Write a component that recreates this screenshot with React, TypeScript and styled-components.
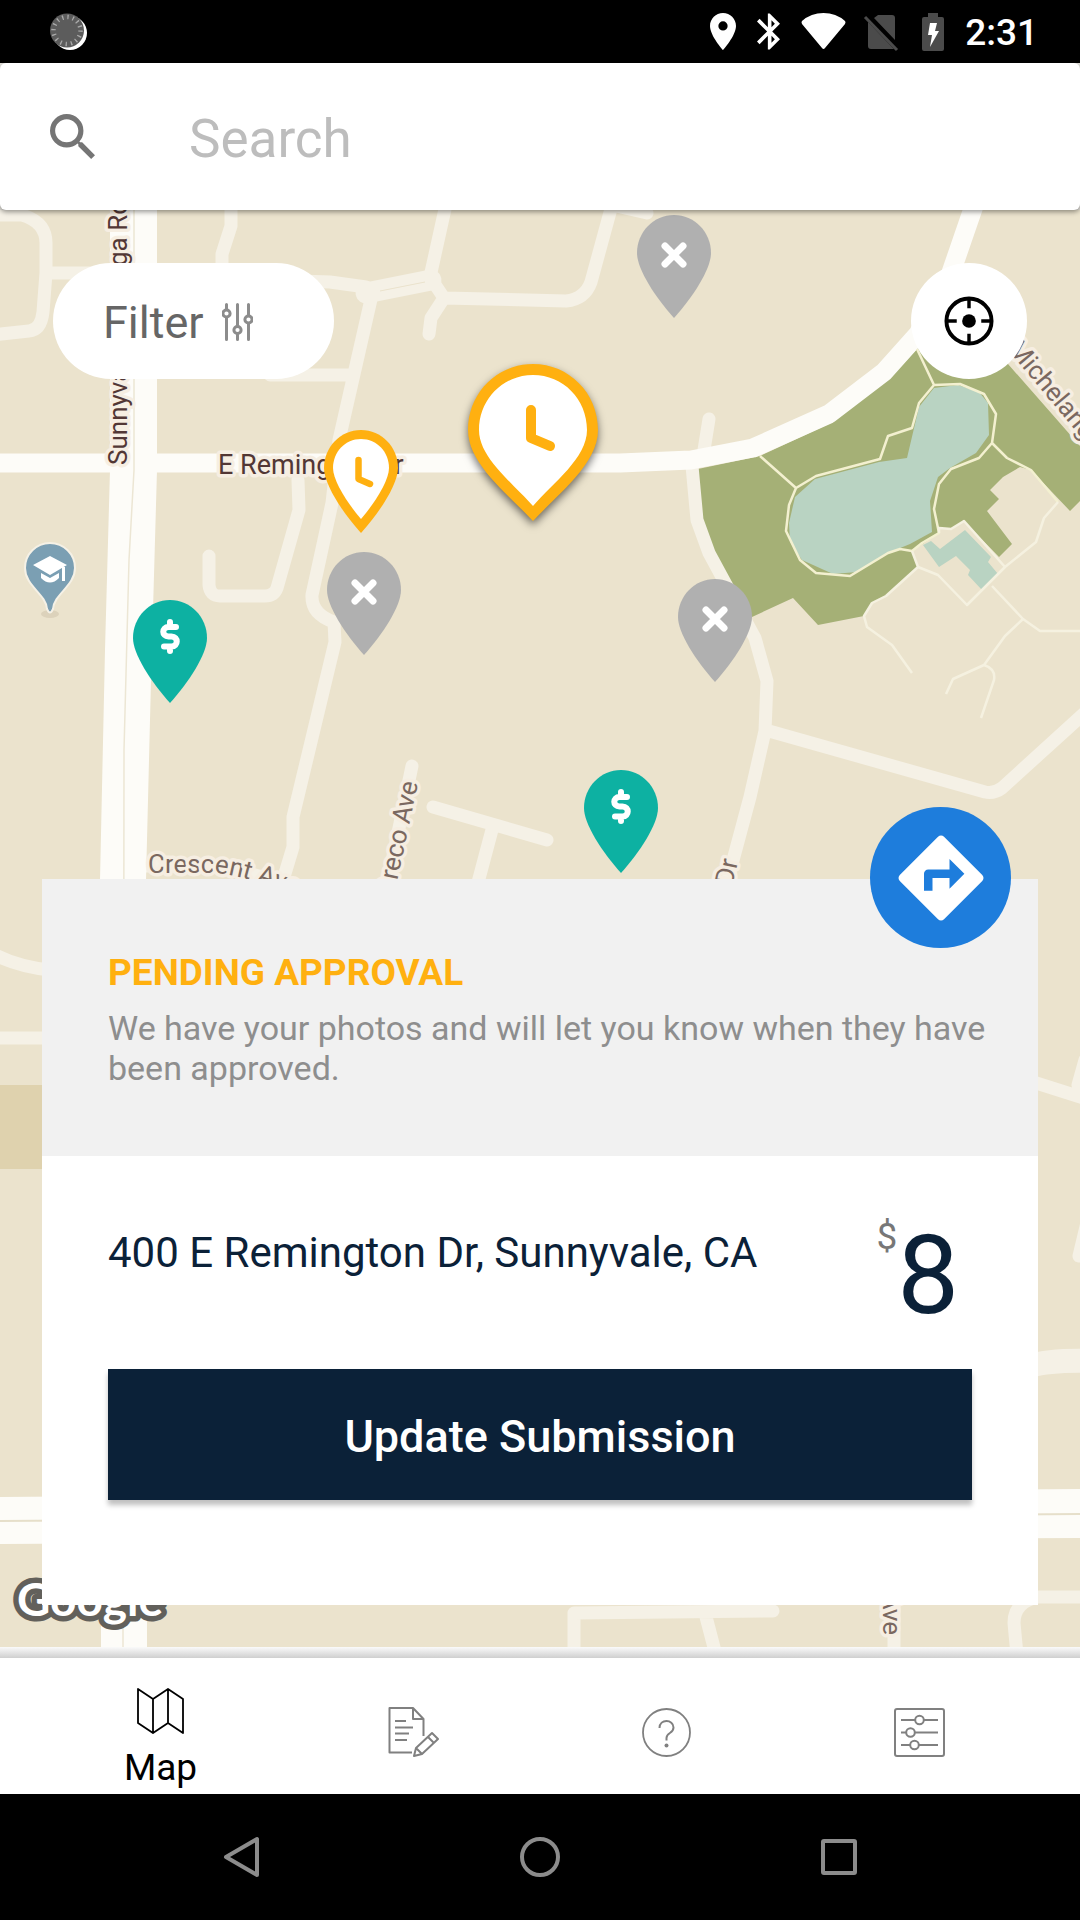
import React from "react";
import styled, { createGlobalStyle } from "styled-components";

const GlobalStyle = createGlobalStyle`
  *, *::before, *::after { box-sizing: border-box; }
  body { margin: 0; background: #000; font-family: Roboto, "Noto Sans", sans-serif; }
  button, input { font-family: inherit; margin: 0; padding: 0; border: 0; background: none; }
  button { cursor: pointer; }
  svg { display: block; flex: none; }
`;

const Page = styled.div`
  display: flex;
  flex-direction: column;
  min-height: 100vh;
  background: #e4e2dc;
`;

/* System status bar */

const StatusBar = styled.header`
  display: flex;
  align-items: center;
  justify-content: space-between;
  height: 63px;
  padding: 0 42px 0 50px;
  background: #000;
  color: #fff;
`;

const StatusIcons = styled.div`
  display: flex;
  align-items: center;
  gap: 21px;
`;

const Clock = styled.time`
  padding-top: 2px;
  font-size: 37px;
  font-weight: 500;
  line-height: 43px;
`;

/* Search */

const SearchBar = styled.form`
  position: relative;
  z-index: 2;
  display: flex;
  align-items: center;
  gap: 94px;
  height: 147px;
  padding: 0 50px;
  border-radius: 6px;
  background: #fff;
  box-shadow: 0 2px 5px rgba(0, 0, 0, 0.4);
`;

const SearchInput = styled.input`
  flex: 1;
  min-width: 0;
  padding-top: 4px;
  outline: 0;
  color: #444;
  font-size: 53px;
  line-height: 62px;
  &::placeholder { color: #bdbdbd; opacity: 1; }
`;

/* Map */

const MapArea = styled.main`
  position: relative;
  display: flex;
  flex: 1;
  flex-direction: column;
  justify-content: space-between;
  gap: 500px;
  overflow: hidden;
  background: #ebe3cd;
`;

const MapCanvas = styled.svg`
  position: absolute;
  inset: 0;
  width: 100%;
  height: 100%;
`;

const RoadLabel = styled.text<{ $minor?: boolean; $large?: boolean }>`
  font-family: Roboto, sans-serif;
  font-size: ${(p) => (p.$large ? 27 : 26)}px;
  fill: ${(p) => (p.$minor ? "#7a6860" : "#523735")};
  stroke: #f6eee2;
  stroke-width: 7px;
  stroke-linejoin: round;
  paint-order: stroke;
`;

const Brand = styled.text`
  font-family: Lato, Roboto, sans-serif;
  font-size: 46px;
  font-weight: 700;
  fill: #fff;
  stroke: #62605b;
  stroke-width: 11px;
  stroke-linejoin: round;
  paint-order: stroke;
`;

const PinButton = styled.button<{ $x: number; $y: number }>`
  position: absolute;
  left: calc(50% + ${(p) => p.$x - 540}px);
  top: ${(p) => p.$y}px;
  transform: translateX(-50%);
`;

const MapControls = styled.div`
  position: relative;
  display: flex;
  justify-content: space-between;
  padding: 53px 53px 0;
`;

const FilterButton = styled.button`
  display: flex;
  align-items: center;
  gap: 18px;
  width: 281px;
  height: 116px;
  padding: 2px 0 0 50px;
  border-radius: 58px;
  background: #fff;
  color: #666;
  font-size: 45px;
  line-height: 53px;
`;

const LocateButton = styled.button`
  display: grid;
  place-items: center;
  width: 116px;
  height: 116px;
  border-radius: 50%;
  background: #fff;
`;

/* Location card */

const Card = styled.section`
  position: relative;
  margin: 0 42px 42px;
  background: #fff;
`;

const DirectionsButton = styled.button`
  position: absolute;
  top: -72px;
  right: 27px;
  display: grid;
  place-items: center;
  width: 141px;
  height: 141px;
  border-radius: 50%;
  background: #1e7ddc;
`;

const CardHeader = styled.div`
  display: flex;
  flex-direction: column;
  gap: 14px;
  padding: 72px 40px 68px 66px;
  background: #f1f1f1;
`;

const StatusTitle = styled.h2`
  margin: 0;
  color: #ffb010;
  font-size: 37px;
  font-weight: 700;
  line-height: 43px;
`;

const StatusText = styled.p`
  margin: 0;
  color: #8e8e8e;
  font-size: 34px;
  line-height: 40px;
`;

const CardBody = styled.div`
  display: flex;
  flex-direction: column;
  gap: 38px;
  padding: 58px 66px 105px;
`;

const Summary = styled.div`
  display: flex;
  align-items: flex-start;
  justify-content: space-between;
  padding-right: 13px;
`;

const Address = styled.h1`
  margin: 0;
  padding-top: 14px;
  color: #0b2138;
  font-size: 42px;
  font-weight: 400;
  line-height: 49px;
`;

const Price = styled.div`
  display: flex;
  align-items: flex-start;
  padding-top: 1px;
`;

const Currency = styled.span`
  color: #777;
  font-size: 37px;
  line-height: 43px;
`;

const Amount = styled.span`
  padding-top: 6px;
  color: #0b2138;
  font-size: 110px;
  line-height: 110px;
`;

const SubmitButton = styled.button`
  height: 131px;
  padding-top: 4px;
  background: #0b2138;
  box-shadow: 0 5px 5px rgba(0, 0, 0, 0.25);
  color: #fff;
  font-size: 45px;
  font-weight: 500;
  line-height: 53px;
`;

/* Bottom tabs and system navigation */

const TabShadow = styled.div`
  height: 11px;
  background: linear-gradient(#fafafa, #cfcfcf);
`;

const TabBar = styled.nav`
  display: flex;
  height: 136px;
  padding: 0 34px;
  background: #fff;
`;

const Tab = styled.a<{ $active?: boolean }>`
  display: flex;
  flex: 1;
  flex-direction: column;
  align-items: center;
  justify-content: center;
  gap: 12px;
  padding-top: ${(p) => (p.$active ? 24 : 12)}px;
  color: ${(p) => (p.$active ? "#000" : "#808080")};
  font-size: 37px;
  line-height: 43px;
  text-decoration: none;
`;

const SystemNav = styled.footer`
  display: flex;
  align-items: center;
  justify-content: center;
  gap: 258px;
  height: 126px;
  background: #000;
`;

const SystemButton = styled.button`
  color: #8c8c8c;
`;

type PinKind = "closed" | "paid" | "pending" | "selected";

const pins: { kind: PinKind; x: number; y: number; label: string }[] = [
  { kind: "closed", x: 674, y: 5, label: "Closed location" },
  { kind: "closed", x: 364, y: 342, label: "Closed location" },
  { kind: "closed", x: 715, y: 369, label: "Closed location" },
  { kind: "paid", x: 170, y: 390, label: "Paid location" },
  { kind: "paid", x: 621, y: 560, label: "Paid location" },
  { kind: "pending", x: 361, y: 220, label: "Pending location" },
  { kind: "selected", x: 533, y: 154, label: "400 E Remington Dr, pending" },
];

const PIN = "M37 0C57.5 0 74 17 74 38C74 54 56 82 37 103C18 82 0 54 0 38C0 17 16.5 0 37 0Z";

const SelectedArt = styled.svg`
  filter: drop-shadow(0 4px 4px rgba(0, 0, 0, 0.55));
`;

function PinArt({ kind }: { kind: PinKind }) {
  if (kind === "selected") {
    return (
      <SelectedArt width="130" height="157" viewBox="0 0 130 157" overflow="visible">
        <path d="M65 0C101 0 130 29 130 66C130 100 90 130 65 157C40 130 0 100 0 66C0 29 29 0 65 0Z" fill="#ffb010" />
        <path d="M65 11C95 11 119 35 119 66C119 94 85 119 65 142C45 119 11 94 11 66C11 35 35 11 65 11Z" fill="#fff" />
        <path d="M63 46V74L82 82" fill="none" stroke="#ffb010" strokeWidth="10" strokeLinecap="round" strokeLinejoin="round" />
      </SelectedArt>
    );
  }
  return (
    <svg width="74" height="103" viewBox="0 0 74 103">
      <path d={PIN} fill={kind === "closed" ? "#b0b0b0" : kind === "paid" ? "#0db1a2" : "#ffb010"} />
      {kind === "closed" && <path d="M28 31L46 49M46 31L28 49" stroke="#fff" strokeWidth="7" strokeLinecap="round" />}
      {kind === "paid" && (
        <path d="M37 22V27M37 47V51M43 27H35.500C28.500 27 28.500 36.500 35.500 36.500H38.500C45.500 36.500 45.500 46.500 38.500 46.500H31" fill="none" stroke="#fff" strokeWidth="6" strokeLinecap="round" />
      )}
      {kind === "pending" && (
        <>
          <path d="M37 9C53 9 65 22 65 38C65 51 50 74 37 89C24 74 9 51 9 38C9 22 21 9 37 9Z" fill="#fff" />
          <path d="M34.500 30V49L46 54" fill="none" stroke="#ffb010" strokeWidth="6.500" strokeLinecap="round" strokeLinejoin="round" />
        </>
      )}
    </svg>
  );
}

function StreetMap() {
  return (
    <MapCanvas viewBox="0 210 1080 1437" preserveAspectRatio="xMidYMin slice" role="img" aria-label="Map of Sunnyvale">
      <rect y="210" width="1080" height="1437" fill="#ebe3cd" />
      <rect y="1085" width="60" height="84" fill="#dfd2ae" />

      <path fill="#a5b076" d="M698 469L760 456L833 422L889 379L917 349L940 320H980L1008 364L1080 446V501L1070 511L1031 470L1020 467L1003 477L990 490L999 499L987 511L1012 544L999 557L964 521L951 529L939 528V533L912 551L918 566L886 596L872 603L864 616L818 625L793 598L752 617L712 549L702 520Z" />
      <path fill="#b9d3c2" d="M934 388L958 385L979 392L988 403L989 435L976 453L950 468L938 477L930 501L932 532L910 544L888 553L857 572L833 574L802 560L790 542L789 523L795 497L815 479L879 462L907 458L919 407Z" />
      <path fill="#b9d3c2" d="M923 545L931 541L940 549L965 530L991 557L988 562L998 574L982 590L968 575L970 570L956 556L939 567Z" />

      <g fill="none" stroke="#f5f1e6" strokeWidth="13" strokeLinecap="round" strokeLinejoin="round">
        <path d="M-8 215H22Q46 222 46 243V273L43 312Q41 330 29 331L-8 335M46 273H112" />
        <path d="M231 200V226L222 254V275" />
        <path d="M300 281L330 282L366 287M447 200L430 277L444 298L566 301Q585 299 591 282L612 205L647 213M444 298L431 318L429 334" />
        <path d="M366 293L431 280" strokeWidth="21" />
        <path d="M372 295L339 440L332 503L312 595Q311 614 334 622L335 642L293 817V847L280 890M270 375H352" />
        <path d="M298 480L299 510L277 588Q274 596 265 596H220Q210 596 209 585V556" />
        <path d="M412 766L386 890M433 807L547 840M493 826L476 890M146 866H222L310 890" />
        <path d="M709 419L704 450M692 466L697 520L709 553L755 638L767 681L765 731L750 797L725 890M769 731L985 792Q994 794 1002 788L1090 708" />
        <path d="M-8 953Q15 966 50 970M-8 1038H60M1030 1081L1090 1100M1078 1085L1085 1060M1090 1210L1079 1256" />
        <path d="M574 1655V1613L773 1611M705 1613L716 1655M894 1600V1655M1090 1597H1038Q1014 1602 1014 1623L1017 1655" />
        <path d="M1030 1366Q1050 1360 1090 1361" strokeWidth="24" />
      </g>

      <g fill="none" stroke="#fdfcf8" strokeWidth="19" strokeLinejoin="round">
        <path d="M-10 463H620L691 460L753 448L829 414L884 372L918 334L945 290L976 200" />
      </g>
      <path fill="#fdfcf8" d="M110 200H157V470L151 680L146 880L147 1650H101L100 880L105 650L110 470Z" />
      <path fill="none" stroke="#ece6d4" strokeWidth="1.500" d="M134 200V470L129 560L124 750L123 1650" />
      <path fill="#fdfcf8" d="M0 1497L1080 1489V1538L0 1544Z" />
      <path fill="none" stroke="#e6dfca" strokeWidth="2" d="M0 1521L1080 1514" />
      <path fill="none" stroke="#ebe3cd" strokeWidth="1" d="M380 291L425 282" />

      <g fill="none" strokeWidth="2.500" strokeLinejoin="round">
        <path stroke="#f3f0d0" d="M760 456L796 488L789 505L786 531L800 560L816 573L850 576L888 553L900 549L912 551L922 543L939 533L934 509L939 484L951 469L979 458L992 443L996 414L984 394L960 384L934 385L919 403L912 428L888 436L880 459L816 476L796 488M917 349L934 385M992 443L1007 458L1031 470L1058 502" />
        <path stroke="#f5f1e0" d="M1058 502L1044 518L1036 542L1005 567L967 605L938 575L918 567L912 551M939 533V528L951 529L964 521L1005 567M992 586L1023 619L1040 631H1080M1023 619L1005 636L984 665L953 679L946 694M984 665Q996 669 994 680L981 718M918 567L886 596L872 603L864 616L867 627L892 645L912 673" />
      </g>

      <RoadLabel transform="translate(127 465) rotate(-90)">Sunnyvale Saratoga Rd</RoadLabel>
      <RoadLabel $large x="218" y="474">E Remington Dr</RoadLabel>
      <RoadLabel $minor transform="translate(1007 349) rotate(50)">Michelangelo Ct</RoadLabel>
      <path id="crescent" d="M148 873H218Q250 877 308 900" fill="none" />
      <RoadLabel $minor>
        <textPath href="#crescent">Crescent Ave</textPath>
      </RoadLabel>
      <RoadLabel $minor textAnchor="end" transform="translate(418 783) rotate(-78)">El Greco Ave</RoadLabel>
      <RoadLabel $minor textAnchor="end" transform="translate(738 861) rotate(-78)">Dr</RoadLabel>
      <RoadLabel $minor textAnchor="end" transform="translate(883 1635) rotate(90)">Ave</RoadLabel>

      <ellipse cx="50" cy="614" rx="9" ry="4" fill="#dcd2bb" />
      <path d="M47 609C46 594 25 586 25 568A25 25 0 0 1 75 568C75 586 54 594 53 609Q50 616 47 609Z" fill="#7b9fb3" stroke="#f5f1e6" strokeWidth="2" />
      <path d="M50 556L67 565L50 575L33 565ZM41 573L50 578L59 573V578Q50 587 41 578ZM62 567H65V581H62Z" fill="#fff" />

      <Brand x="17" y="1616">Google</Brand>
    </MapCanvas>
  );
}

export default function App() {
  return (
    <>
      <GlobalStyle />
      <Page>
        <StatusBar>
          <svg width="37" height="37" viewBox="0 0 37 37" aria-hidden="true">
            <circle cx="20" cy="20" r="17" fill="#fff" />
            <circle cx="17" cy="17.500" r="17" fill="#5c5c5c" />
            <circle cx="17" cy="17.500" r="13.500" fill="none" stroke="#aaa" strokeWidth="4.500" strokeDasharray="1.300 4" />
          </svg>
          <StatusIcons>
            <svg width="26" height="37" viewBox="5 2 14 20" preserveAspectRatio="none" aria-hidden="true">
              <path fill="#fff" d="M12 2C8.130 2 5 5.130 5 9c0 5.250 7 13 7 13s7-7.750 7-13c0-3.870-3.130-7-7-7zm0 9.500a2.500 2.500 0 0 1 0-5 2.500 2.500 0 0 1 0 5z" />
            </svg>
            <svg width="23" height="37" viewBox="5 2 12.710 20" aria-hidden="true">
              <path fill="#fff" d="M17.710 7.710L12 2h-1v7.590L6.410 5 5 6.410 10.590 12 5 17.590 6.410 19 11 14.410V22h1l5.710-5.710-4.300-4.290 4.300-4.290zM13 5.830l1.880 1.880L13 9.590V5.830zm1.880 10.460L13 18.170v-3.760l1.880 1.880z" />
            </svg>
            <svg width="45" height="37" viewBox="0 0 45 37" aria-hidden="true">
              <path fill="#fff" d="M1 8Q10 0 22.500 0T44 8Q45 9 44 11L24 35Q22.500 37 21 35L1 11Q0 9 1 8Z" />
            </svg>
            <svg width="34" height="37" viewBox="3 0 34 37" overflow="visible" aria-hidden="true">
              <path fill="#4b4b4b" d="M14 2H28Q31 2 31 5V27L10 5ZM4 9L30 36H7Q4 36 4 33Z" />
              <path d="M1 4L33 37" stroke="#4b4b4b" strokeWidth="3" />
            </svg>
            <svg width="22" height="38" viewBox="0 0 22 38" aria-hidden="true">
              <path fill="#4b4b4b" d="M6 0H16V4H20Q22 4 22 6V36Q22 38 20 38H2Q0 38 0 36V6Q0 4 2 4H6Z" />
              <path fill="#fff" d="M8 10H15L13 18H17L8 34L10 22H6Z" />
            </svg>
            <Clock>2:31</Clock>
          </StatusIcons>
        </StatusBar>

        <SearchBar role="search" onSubmit={(e) => e.preventDefault()}>
          <svg width="45" height="45" viewBox="3 3 17.490 17.490" aria-hidden="true">
            <path fill="#757575" d="M15.500 14h-.790l-.280-.270A6.471 6.471 0 0 0 16 9.500 6.500 6.500 0 1 0 9.500 16c1.610 0 3.090-.590 4.230-1.570l.270.280v.790l5 4.990L20.490 19l-4.990-5zm-6 0C7.010 14 5 11.990 5 9.500S7.010 5 9.500 5 14 7.010 14 9.500 11.990 14 9.500 14z" />
          </svg>
          <SearchInput type="text" placeholder="Search" aria-label="Search" />
        </SearchBar>

        <MapArea>
          <StreetMap />
          {pins.map((pin) => (
            <PinButton key={`${pin.x}-${pin.y}`} $x={pin.x} $y={pin.y} aria-label={pin.label}>
              <PinArt kind={pin.kind} />
            </PinButton>
          ))}

          <MapControls>
            <FilterButton>
              Filter
              <svg width="31" height="38" viewBox="0 0 31 38" fill="none" stroke="#8c8c8c" strokeWidth="3" strokeLinecap="round" aria-hidden="true">
                <path d="M4.500 1.500V6M4.500 15V36.500M15.500 1.500V22.500M15.500 31.500V36.500M26.500 1.500V12M26.500 21V36.500" />
                <circle cx="4.500" cy="10.500" r="3.600" />
                <circle cx="15.500" cy="27" r="3.600" />
                <circle cx="26.500" cy="16.500" r="3.600" />
              </svg>
            </FilterButton>
            <LocateButton aria-label="My location">
              <svg width="50" height="52" viewBox="0 0 51 52" fill="none" stroke="#000" aria-hidden="true">
                <circle cx="25.500" cy="26" r="23" strokeWidth="4" />
                <path d="M25.500 4V13M25.500 39V48M4 26H13M38 26H47" strokeWidth="3.500" />
                <circle cx="25.500" cy="26" r="7" fill="#000" stroke="none" />
              </svg>
            </LocateButton>
          </MapControls>

          <Card>
            <CardHeader>
              <StatusTitle>PENDING APPROVAL</StatusTitle>
              <StatusText>We have your photos and will let you know when they have been approved.</StatusText>
            </CardHeader>
            <CardBody>
              <Summary>
                <Address>400 E Remington Dr, Sunnyvale, CA</Address>
                <Price>
                  <Currency>$</Currency>
                  <Amount>8</Amount>
                </Price>
              </Summary>
              <SubmitButton>Update Submission</SubmitButton>
            </CardBody>
            <DirectionsButton aria-label="Directions">
              <svg width="102" height="102" viewBox="0 0 24 24" aria-hidden="true">
                <path fill="#fff" d="M21.710 11.290l-9-9c-.390-.390-1.020-.390-1.410 0l-9 9c-.390.390-.390 1.020 0 1.410l9 9c.390.390 1.020.390 1.410 0l9-9c.390-.380.390-1.010 0-1.410zM14 14.500V12h-4v3H8v-4c0-.550.450-1 1-1h5V7.500l3.500 3.500-3.500 3.500z" />
              </svg>
            </DirectionsButton>
          </Card>
        </MapArea>

        <TabShadow />
        <TabBar>
          <Tab href="#map" $active>
            <svg width="47" height="46" viewBox="0 0 47 46" fill="none" stroke="currentColor" strokeWidth="1.800" strokeLinejoin="round" aria-hidden="true">
              <path d="M1 1L16 11L31 1L46 11V45L31 35L16 45L1 35ZM16 11V45M31 1V35" />
            </svg>
            Map
          </Tab>
          <Tab href="#submissions" aria-label="Submissions">
            <svg width="51" height="50" viewBox="0 0 51 50" fill="none" stroke="currentColor" strokeWidth="2" strokeLinejoin="round" aria-hidden="true">
              <path d="M24 45.500H1.500V1H25L35.500 12V29M25 1V12H35.500M7 14H18M7 20.500H25M7 26.500H21M7 33H19" />
              <path d="M26 49L28 41L44 26L50 32L34 47ZM40 30L46 36M28 41L34 47" />
            </svg>
          </Tab>
          <Tab href="#help" aria-label="Help">
            <svg width="49" height="49" viewBox="0 0 49 49" fill="none" stroke="currentColor" strokeWidth="1.800" aria-hidden="true">
              <circle cx="24.500" cy="24.500" r="23.500" />
              <path d="M17.500 20C17.500 10.500 31.500 11 31.500 19.500C31.500 26 24.500 24 24.500 30V32.500" strokeWidth="2" />
              <circle cx="24.500" cy="37.500" r="2" fill="currentColor" stroke="none" />
            </svg>
          </Tab>
          <Tab href="#settings" aria-label="Settings">
            <svg width="51" height="49" viewBox="0 0 51 49" fill="none" stroke="currentColor" strokeWidth="2" aria-hidden="true">
              <rect x="1" y="1" width="49" height="47" rx="2" />
              <path d="M7 12H21M30 12H44M7 24.500H12M21 24.500H44M7 37H16M25 37H44" />
              <circle cx="25.500" cy="12" r="4.300" />
              <circle cx="16.500" cy="24.500" r="4.300" />
              <circle cx="20.500" cy="37" r="4.300" />
            </svg>
          </Tab>
        </TabBar>

        <SystemNav>
          <SystemButton aria-label="Back">
            <svg width="40" height="42" viewBox="0 0 40 42" aria-hidden="true">
              <path d="M36 3V39L5 21Z" fill="none" stroke="currentColor" strokeWidth="4" strokeLinejoin="round" />
            </svg>
          </SystemButton>
          <SystemButton aria-label="Home">
            <svg width="42" height="42" viewBox="0 0 42 42" aria-hidden="true">
              <circle cx="21" cy="21" r="18" fill="none" stroke="currentColor" strokeWidth="4" />
            </svg>
          </SystemButton>
          <SystemButton aria-label="Recent apps">
            <svg width="40" height="42" viewBox="0 0 40 42" aria-hidden="true">
              <rect x="4" y="5" width="32" height="32" rx="1" fill="none" stroke="currentColor" strokeWidth="4" />
            </svg>
          </SystemButton>
        </SystemNav>
      </Page>
    </>
  );
}
